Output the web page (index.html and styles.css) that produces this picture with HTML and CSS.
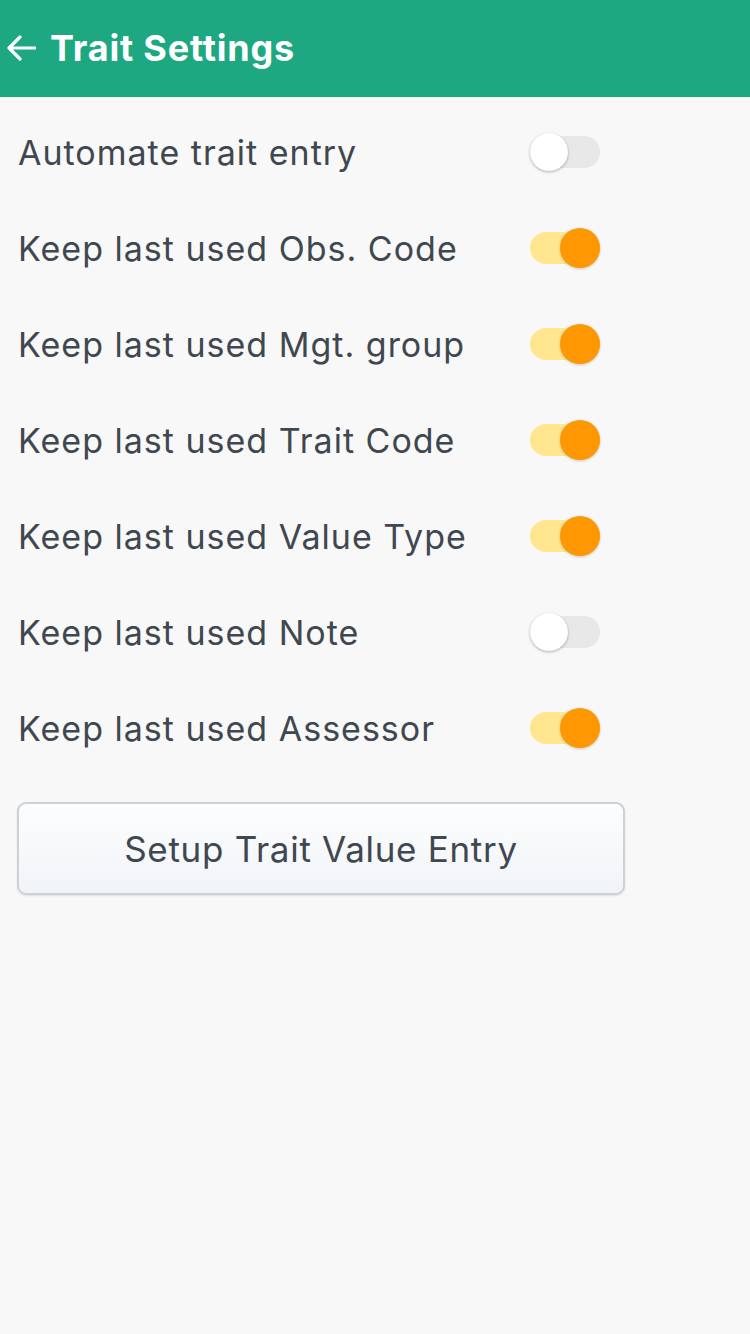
FILE: index.html
```html
<!DOCTYPE html>
<html>
<head>
<meta charset="utf-8">
<link rel="stylesheet" href="styles.css">
</head>
<body>
<header class="bar">
  <svg class="back" width="30" height="26" viewBox="0 0 30 26"><path d="M14 2 L3 13 L14 24 M3 13 H29" fill="none" stroke="#fff" stroke-width="3.2" stroke-linecap="round" stroke-linejoin="round"/></svg>
  <h1 class="title">Trait Settings</h1>
</header>
<main class="content">
  <div class="row"><span class="label">Automate trait entry</span><span class="toggle"><span class="knob"></span></span></div>
  <div class="row"><span class="label">Keep last used Obs. Code</span><span class="toggle on"><span class="knob"></span></span></div>
  <div class="row"><span class="label">Keep last used Mgt. group</span><span class="toggle on"><span class="knob"></span></span></div>
  <div class="row"><span class="label">Keep last used Trait Code</span><span class="toggle on"><span class="knob"></span></span></div>
  <div class="row"><span class="label">Keep last used Value Type</span><span class="toggle on"><span class="knob"></span></span></div>
  <div class="row"><span class="label">Keep last used Note</span><span class="toggle"><span class="knob"></span></span></div>
  <div class="row"><span class="label">Keep last used Assessor</span><span class="toggle on"><span class="knob"></span></span></div>
  <button class="btn">Setup Trait Value Entry</button>
</main>
</body>
</html>
```
FILE: styles.css
```css
html, body {
  margin: 0;
  padding: 0;
}
body {
  width: 750px;
  height: 1334px;
  background: #f8f8f8;
  font-family: Inter, "Liberation Sans", sans-serif;
  overflow: hidden;
}
.bar {
  height: 97px;
  background: #1ea882;
  display: flex;
  align-items: center;
  padding-left: 6px;
  gap: 14px;
  box-sizing: border-box;
}
.back {
  display: block;
  margin-top: -2px;
}
.title {
  margin: 0;
  color: #fff;
  font-size: 36px;
  font-weight: 700;
  letter-spacing: 0.8px;
  margin-top: -1px;
}
.content {
  padding: 7px 0 0 18px;
}
.row {
  height: 96px;
  display: flex;
  align-items: center;
  justify-content: space-between;
  width: 582px;
}
.label {
  font-size: 34px;
  color: #3f4750;
  letter-spacing: 1px;
}
.toggle {
  position: relative;
  width: 70px;
  height: 32px;
  border-radius: 16px;
  background: #e8e8e8;
}
.knob {
  position: absolute;
  top: -3px;
  left: 0;
  width: 38px;
  height: 38px;
  border-radius: 50%;
  background: #fff;
  box-shadow: 0 1px 3px rgba(0,0,0,0.3);
}
.toggle.on {
  background: #ffe68f;
}
.toggle.on .knob {
  left: auto;
  right: 0;
  top: -4px;
  width: 40px;
  height: 40px;
  background: #ff9800;
  box-shadow: 0 1px 3px rgba(0,0,0,0.2);
}
.btn {
  display: block;
  margin-top: 26px;
  width: 608px;
  height: 93px;
  border: 2px solid #cdd1d6;
  border-radius: 9px;
  background: linear-gradient(#fcfdfe, #f1f4f7);
  font-family: Inter, "Liberation Sans", sans-serif;
  font-size: 35px;
  color: #3f4750;
  letter-spacing: 0.7px;
  box-shadow: 0 1px 2px rgba(0,0,0,0.1);
  padding: 0;
  margin-left: -1px;
}
```
